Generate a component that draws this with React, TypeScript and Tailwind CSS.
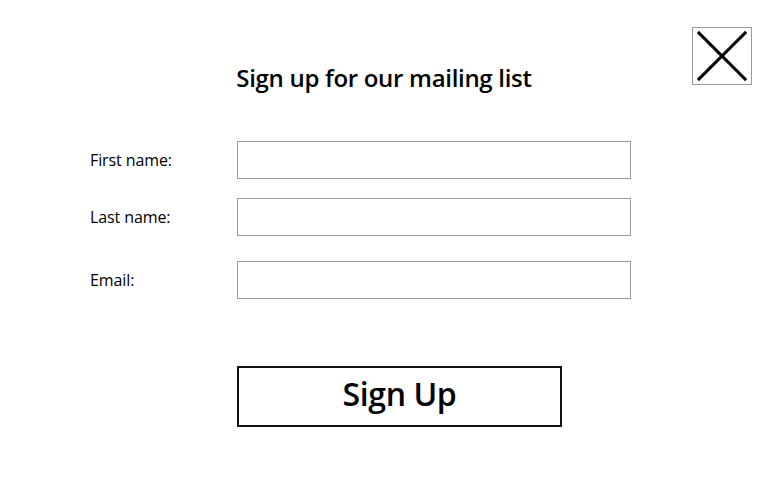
export default function App() {
  const fields = [
    { label: 'First name:', mt: 'mt-0' },
    { label: 'Last name:', mt: 'mt-[19px]' },
    { label: 'Email:', mt: 'mt-[25px]' },
  ]

  return (
    <div className="relative w-[768px] h-[486px] bg-white text-black font-['Open_Sans',sans-serif]">
      <button className="absolute top-[27px] right-[16px] w-[60px] h-[58px] border border-[#999] bg-white">
        <svg viewBox="0 0 60 58" className="w-full h-full">
          <line x1="5" y1="4" x2="55" y2="54" stroke="#000" strokeWidth="3" />
          <line x1="55" y1="4" x2="5" y2="54" stroke="#000" strokeWidth="3" />
        </svg>
      </button>

      <div className="flex flex-col pt-[62px]">
        <h1 className="text-center text-[24px] font-semibold leading-[32px] tracking-[-0.3px]">
          Sign up for our mailing list
        </h1>

        <form className="mt-[47px] flex flex-col pl-[90px]">
          {fields.map((f) => (
            <div key={f.label} className={`flex items-center ${f.mt}`}>
              <label className="w-[147px] text-[16px] tracking-[-0.1px]">{f.label}</label>
              <input
                type="text"
                className="w-[394px] h-[38px] border-[1.5px] border-[#9a9a9a] outline-none px-2"
              />
            </div>
          ))}

          <button
            type="button"
            className="ml-[147px] mt-[67px] w-[325px] h-[61px] border-2 border-[#111] text-[32px] font-semibold tracking-[-0.4px] leading-none pb-[6px]"
          >
            Sign Up
          </button>
        </form>
      </div>
    </div>
  )
}
